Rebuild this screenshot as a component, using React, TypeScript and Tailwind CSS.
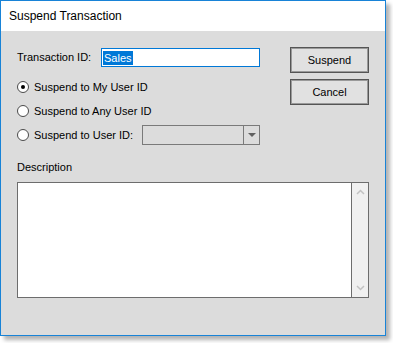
import React from "react";

const font = { fontFamily: '"Liberation Sans", Arial, sans-serif' };

function Radio({ checked }: { checked?: boolean }) {
  return (
    <div className="w-[12px] h-[12px] rounded-full border border-[#4a4a4a] bg-white flex items-center justify-center shrink-0">
      {checked && <div className="w-[4px] h-[4px] rounded-full bg-black" />}
    </div>
  );
}

function Btn({ children }: { children: React.ReactNode }) {
  return (
    <div className="w-[79px] h-[26px] border border-[#555] shadow-[inset_0_0_0_1px_#9a9a9a] bg-[#e1e1e1] flex items-center justify-center text-[11px] leading-[13px] text-black">
      {children}
    </div>
  );
}

export default function App() {
  return (
    <div className="w-[393px] h-[343px] bg-white" style={font}>
      <div className="w-[386px] h-[336px] border border-[#1883d7] bg-[#dcdcdc] shadow-[4px_4px_4px_rgba(0,0,0,0.3)] flex flex-col">
        <div className="h-[30px] bg-white flex items-center pl-[8px] text-[12px] text-black shrink-0">
          Suspend Transaction
        </div>
        <div className="flex flex-col pl-[16px] text-[11px] leading-[13px] text-black">
          <div className="flex">
            <div className="w-[243px] pt-[17px] flex flex-col">
              <div className="h-[19px] flex items-center">
                <div className="w-[84px]">Transaction ID:</div>
                <div className="w-[159px] h-[19px] border border-[#0078d7] bg-white flex items-center pl-[1px]">
                  <span className="bg-[#0078d7] text-white px-[1px] leading-[14px]">Sales</span>
                </div>
              </div>
              <div className="mt-[10px] flex flex-col gap-[4px]">
                <div className="h-[20px] flex items-center">
                  <Radio checked />
                  <span className="ml-[5px]">Suspend to My User ID</span>
                </div>
                <div className="h-[20px] flex items-center">
                  <Radio />
                  <span className="ml-[5px]">Suspend to Any User ID</span>
                </div>
                <div className="h-[20px] flex items-center">
                  <Radio />
                  <span className="ml-[5px] w-[108px]">Suspend to User ID:</span>
                  <div className="w-[118px] h-[20px] border border-[#7a7a7a] bg-[#dcdcdc] flex justify-end">
                    <div className="w-[16px] h-full border-l border-[#7a7a7a] flex items-center justify-center">
                      <svg width="8" height="4" viewBox="0 0 8 4">
                        <path d="M0 0H8L4 4Z" fill="#606060" />
                      </svg>
                    </div>
                  </div>
                </div>
              </div>
            </div>
            <div className="ml-[30px] pt-[16px] flex flex-col gap-[6px]">
              <Btn>Suspend</Btn>
              <Btn>Cancel</Btn>
            </div>
          </div>
          <div className="mt-[16px]">Description</div>
          <div className="mt-[8px] w-[352px] h-[116px] border border-[#6d6d6d] bg-white flex justify-end">
            <div className="w-[17px] h-full border-l border-[#6d6d6d] bg-[#f0f0f0] flex flex-col justify-between items-center py-[6px]">
              <svg width="9" height="6" viewBox="0 0 9 6">
                <path d="M1 5L4.5 1.5L8 5" stroke="#c2c2c2" strokeWidth="1.5" fill="none" />
              </svg>
              <svg width="9" height="6" viewBox="0 0 9 6">
                <path d="M1 1L4.5 4.5L8 1" stroke="#c2c2c2" strokeWidth="1.5" fill="none" />
              </svg>
            </div>
          </div>
        </div>
      </div>
    </div>
  );
}
